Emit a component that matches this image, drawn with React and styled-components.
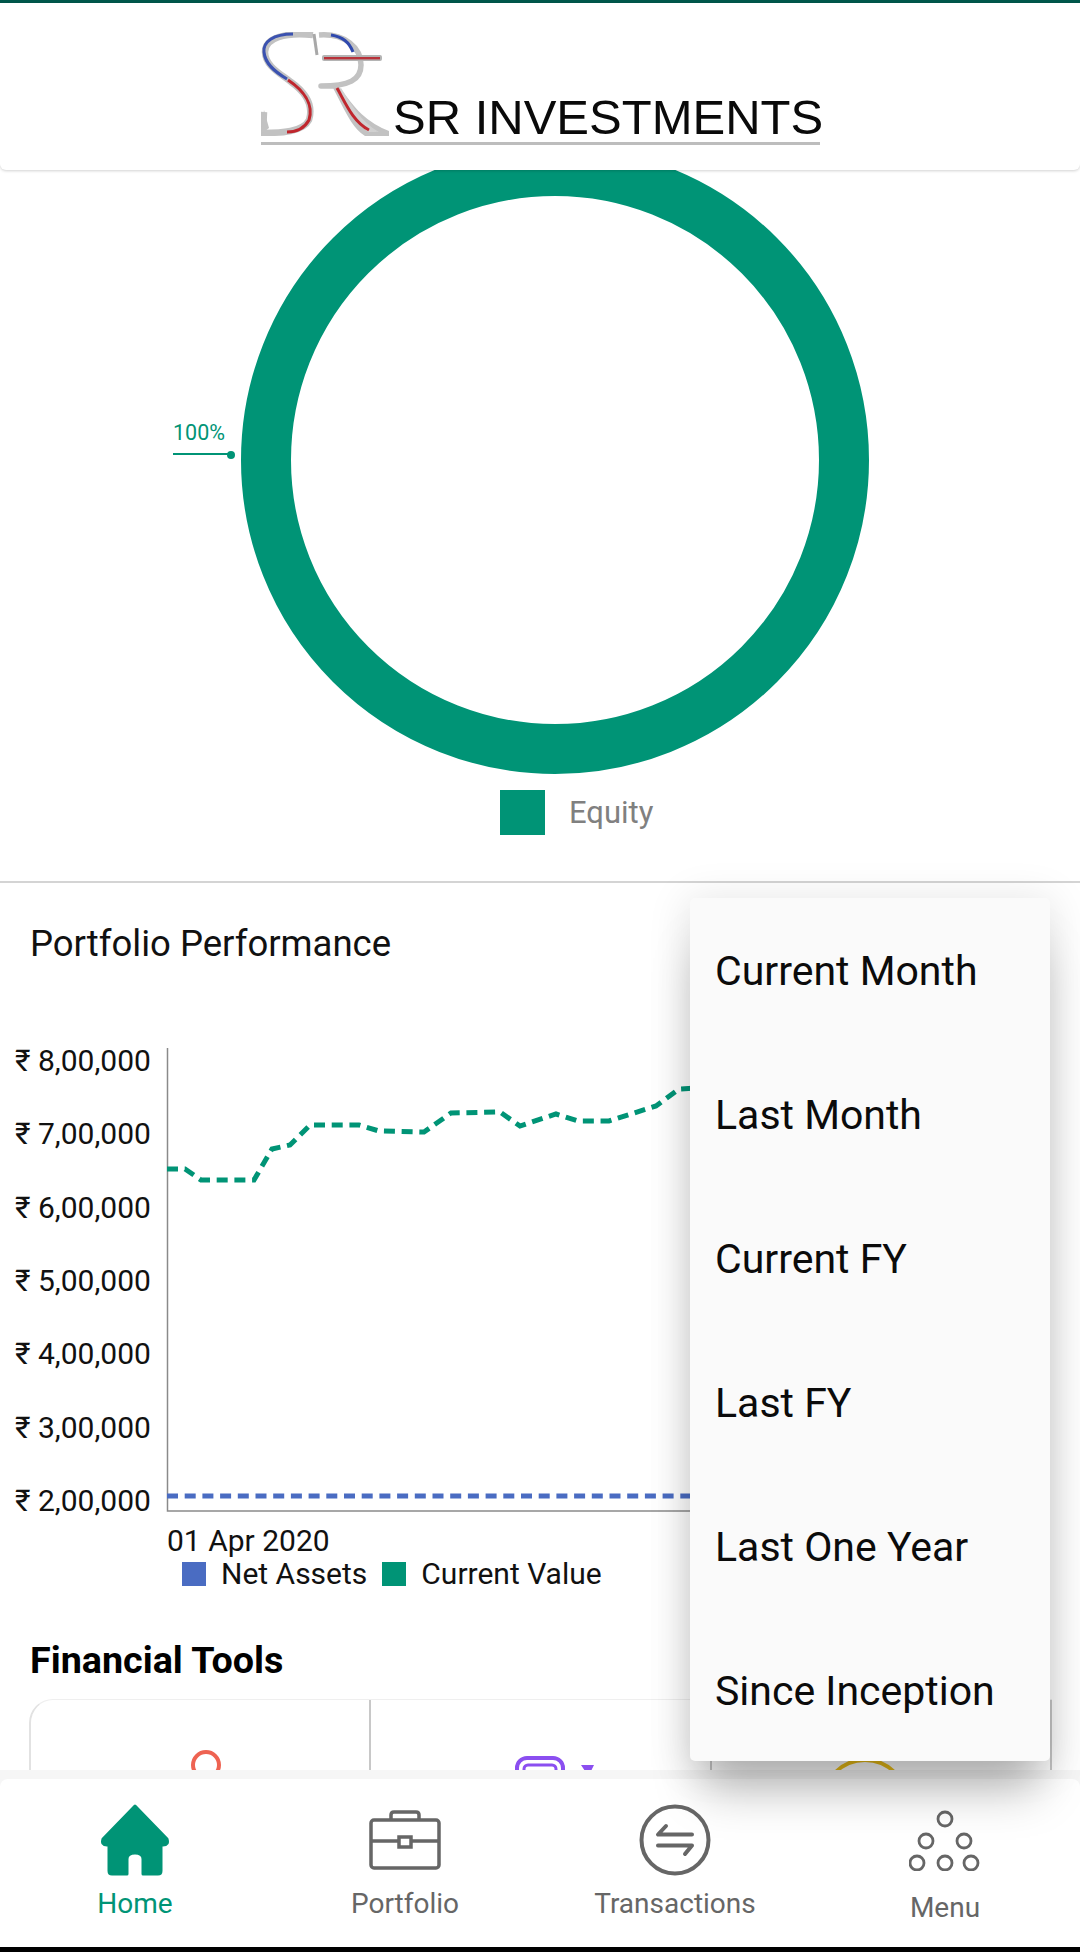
import React from "react";
import styled, { createGlobalStyle } from "styled-components";

const Global = createGlobalStyle`
  html, body { margin: 0; padding: 0; background: #fff; }
  body { font-family: Roboto, "Noto Sans", sans-serif; }
`;

const GREEN = "#009476";
const BLUE = "#4a6cc2";
const GREY = "#666666";

const Page = styled.div`
  position: relative;
  width: 1080px;
  height: 1952px;
  overflow: hidden;
  background: #fff;
  display: flex;
  flex-direction: column;
`;
const TopLine = styled.div`
  height: 3px;
  background: #00574b;
  flex: none;
`;
const Header = styled.header`
  position: relative;
  z-index: 2;
  height: 167px;
  flex: none;
  background: #fff;
  box-shadow: 0 1px 3px rgba(0, 0, 0, 0.18);
  border-radius: 0 0 6px 6px;
  display: flex;
  justify-content: flex-start;
  padding: 29px 0 0 261px;
  box-sizing: border-box;
`;
const Logo = styled.div`
  width: 559px;
  height: 110px;
  border-bottom: 3px solid #bdbdbd;
  display: flex;
  align-items: flex-start;
`;
const LogoMark = styled.svg`
  display: block;
  flex: none;
`;
const LogoWord = styled.span`
  font-family: "Liberation Sans", Arial, sans-serif;
  font-size: 49px;
  line-height: 48px;
  margin: 61px 0 0 4px;
  color: #0a0a0a;
  white-space: nowrap;
`;
const DonutBox = styled.section`
  height: 604px;
  flex: none;
`;
const DonutSvg = styled.svg`
  display: block;
`;
const LegendRow = styled.div`
  display: flex;
  align-items: center;
  flex: none;
  padding: 16px 0 46px 500px;
  border-bottom: 2px solid #d4d4d4;
`;
const Swatch = styled.i`
  display: block;
  flex: none;
  width: ${(p) => p.$size}px;
  height: ${(p) => p.$size}px;
  background: ${(p) => p.$color};
`;
const EquityText = styled.span`
  font-size: 31px;
  color: #808080;
  margin-left: 24px;
`;
const Perf = styled.section`
  flex: none;
  padding-top: 39px;
`;
const PerfTitle = styled.h2`
  margin: 0 0 0 30px;
  font-size: 36.5px;
  line-height: 44px;
  font-weight: 400;
  color: #111;
`;
const ChartSvg = styled.svg`
  display: block;
  margin-top: 75px;
`;
const DateLabel = styled.div`
  margin: 2px 0 0 167px;
  font-size: 30px;
  line-height: 36px;
  color: #111;
`;
const ChartLegend = styled.div`
  display: flex;
  align-items: center;
  height: 30px;
  padding-left: 182px;
`;
const ChartLegendText = styled.span`
  font-size: 30px;
  line-height: 30px;
  color: #111;
  margin: 0 15px 0 15px;
`;
const Tools = styled.section`
  padding: 49px 0 0 29px;
`;
const ToolsTitle = styled.h3`
  margin: 0 0 0 1px;
  font-size: 37.7px;
  line-height: 44px;
  font-weight: 700;
  color: #000;
`;
const ToolCard = styled.div`
  margin-top: 17px;
  width: 1023px;
  height: 240px;
  border-radius: 24px 0 0 0;
  border-top: 1px solid #efefef;
  border-left: 2px solid #e2e2e2;
  box-sizing: border-box;
  display: grid;
  grid-template-columns: 340px 341px 340px;
`;
const ToolCell = styled.div`
  border-right: 2px solid #c8c8c8;
  display: flex;
  justify-content: center;
  padding-top: ${(p) => p.$top}px;
  padding-left: ${(p) => Math.max(p.$shift, 0) * 2}px;
  padding-right: ${(p) => Math.max(-p.$shift, 0) * 2}px;
  box-sizing: border-box;
`;
const Dropdown = styled.ul`
  position: absolute;
  z-index: 5;
  left: 690px;
  top: 898px;
  width: 360px;
  height: 863px;
  margin: 0;
  padding: 1px 0 0;
  box-sizing: border-box;
  list-style: none;
  background: #fafafa;
  border-radius: 5px;
  box-shadow: 0 40px 45px -12px rgba(0, 0, 0, 0.28), 0 4px 40px 4px rgba(0, 0, 0, 0.1);
  display: grid;
  grid-template-rows: repeat(6, 144px);
`;
const DropItem = styled.li`
  display: flex;
  align-items: center;
  padding-left: 25px;
  font-size: 41px;
  color: #0b0b0b;
`;
const NavWrap = styled.div`
  position: absolute;
  z-index: 3;
  left: 0;
  right: 0;
  bottom: 0;
  height: 182px;
  background: #f6f6f6;
  padding-top: 9px;
  box-sizing: border-box;
`;
const Nav = styled.nav`
  height: 168px;
  background: #fff;
  border-radius: 8px 8px 0 0;
  display: grid;
  grid-template-columns: repeat(4, 270px);
`;
const NavBlack = styled.div`
  height: 5px;
  background: #000;
`;
const NavItem = styled.div`
  display: flex;
  flex-direction: column;
  align-items: center;
`;
const NavIconBox = styled.div`
  height: 70px;
  margin-top: 26px;
  display: flex;
  align-items: center;
  justify-content: center;
`;
const NavLabel = styled.span`
  margin-top: ${(p) => p.$gap}px;
  font-size: 28px;
  line-height: 30px;
  color: ${(p) => (p.$active ? GREEN : GREY)};
`;

const pts = [[167,1168],[185,1168],[201,1179],[254,1179],[272,1148],[290,1144],[310,1124],[359,1124],[379,1130],[424,1131],[451,1112],[500,1111],[520,1125],[556,1113],[578,1120],[609,1120],[634,1112],[656,1105],[679,1088],[1000,1070]];
const ticks = [["₹ 8,00,000",1059],["₹ 7,00,000",1132],["₹ 6,00,000",1206],["₹ 5,00,000",1279],["₹ 4,00,000",1352],["₹ 3,00,000",1426],["₹ 2,00,000",1499]];
const CHART_TOP = 1040;

const SrMark = () => (
  <LogoMark width="128" height="104" viewBox="0 0 128 104" aria-hidden="true">
    <path d="M52 3 C24 0 4 6 4 20 C4 34 20 42 30 50 C44 60 53 72 48 88 C42 100 20 101 2 101 L3 80" fill="none" stroke="#c2c2c2" strokeWidth="6.5" />
    <path d="M0 102 L3 78 L8 96 Z" fill="#c2c2c2" />
    <path d="M53 2 L56 23" fill="none" stroke="#a8a8a8" strokeWidth="3" />
    <path d="M32 2 C12 2 2 10 3 20 C4 32 14 40 26 47" fill="none" stroke="#3b52b0" strokeWidth="3" />
    <path d="M27 48 C42 58 53 72 48 88 C43 97 34 100 26 100" fill="none" stroke="#c0262d" strokeWidth="3" />
    <path d="M58 3 C84 1 100 16 100 33 C100 48 88 54 60 54 H74 C86 68 96 90 128 102 H106 C92 94 84 72 74 54" fill="none" stroke="#c2c2c2" strokeWidth="5.5" strokeLinejoin="round" />
    <path d="M78 60 C86 72 94 88 108 99 L118 100 C100 90 90 72 80 56 Z" fill="#d0d0d0" />
    <path d="M70 3 C82 5 88 10 92 20" fill="none" stroke="#2f49ae" strokeWidth="3" />
    <path d="M76 56 C84 70 92 90 108 98" fill="none" stroke="#c0262d" strokeWidth="3" />
    <rect x="61" y="23" width="60" height="6" rx="2" fill="#b4b4b4" />
    <rect x="63" y="25" width="56" height="2.4" fill="#b8323a" />
  </LogoMark>
);

const HomeIcon = () => (
  <svg width="72" height="72" viewBox="0 0 72 72" aria-hidden="true">
    <path d="M36 2 L68 35 Q70 41 64 41 L62 41 L62 67 Q62 70 59 70 L44 70 L44 55 Q44 49 36 49 Q28 49 28 55 L28 70 L13 70 Q10 70 10 67 L10 41 L8 41 Q2 41 4 35 Z" fill={GREEN} stroke={GREEN} strokeWidth="3" strokeLinejoin="round" />
  </svg>
);
const CaseIcon = () => (
  <svg width="72" height="60" viewBox="0 0 72 60" fill="none" stroke={GREY} strokeWidth="3.5" aria-hidden="true">
    <path d="M22 10 V5 Q22 2 25 2 H47 Q50 2 50 5 V10" />
    <rect x="2" y="10" width="68" height="48" rx="3" />
    <path d="M2 31 H30 M42 31 H70" />
    <rect x="30" y="27" width="12" height="10" fill="#fff" />
  </svg>
);
const SwapIcon = () => (
  <svg width="72" height="72" viewBox="0 0 72 72" fill="none" stroke={GREY} aria-hidden="true">
    <circle cx="36" cy="36" r="33.5" strokeWidth="4" />
    <path d="M27 22 L19 30.5 H53 M19 41.5 H53 L46 50" strokeWidth="4" strokeLinecap="round" strokeLinejoin="round" />
  </svg>
);
const DotsIcon = () => (
  <svg width="72" height="62" viewBox="0 0 72 62" fill="none" stroke={GREY} strokeWidth="2.8" aria-hidden="true">
    {[[36,10],[17,32],[55,32],[8,54],[36,54],[62,54]].map(([x, y]) => (
      <circle key={x + "-" + y} cx={x} cy={y} r="7" />
    ))}
  </svg>
);

const tools = [
  { top: 49, shift: 6, icon: <svg width="30" height="60" viewBox="0 0 30 60" fill="none" stroke="#ee6352" strokeWidth="4"><circle cx="15" cy="16" r="13" /></svg> },
  { top: 56, shift: 14, icon: <svg width="80" height="60" viewBox="0 0 80 60" fill="none"><rect x="2" y="2" width="46" height="50" rx="10" stroke="#8b4ff0" strokeWidth="4" /><rect x="9" y="9" width="32" height="10" rx="4" stroke="#8b4ff0" strokeWidth="3" /><path d="M66 9 H79 L76 15 L77 22 H68 L70 15 Z" fill="#8b4ff0" /></svg> },
  { top: 58, shift: -16, icon: <svg width="88" height="60" viewBox="0 0 88 60" fill="none" stroke="#ecbf18" strokeWidth="4"><circle cx="44" cy="44" r="42" /></svg> },
];

export default function App() {
  return (
    <Page>
      <Global />
      <TopLine />
      <Header>
        <Logo>
          <SrMark />
          <LogoWord>SR INVESTMENTS</LogoWord>
        </Logo>
      </Header>
      <DonutBox>
        <DonutSvg width="1080" height="604" viewBox="0 170 1080 604">
          <circle cx="555" cy="460" r="289" fill="none" stroke={GREEN} strokeWidth="50" />
          <text x="173" y="440" fontFamily="Roboto, sans-serif" fontSize="21.5" fill={GREEN}>100%</text>
          <path d="M173 454 H231" stroke={GREEN} strokeWidth="2" />
          <circle cx="231" cy="455" r="4" fill={GREEN} />
        </DonutSvg>
      </DonutBox>
      <LegendRow>
        <Swatch $size={45} $color={GREEN} />
        <EquityText>Equity</EquityText>
      </LegendRow>
      <Perf>
        <PerfTitle>Portfolio Performance</PerfTitle>
        <ChartSvg width="1080" height="480" viewBox={`0 ${CHART_TOP} 1080 480`}>
          {ticks.map(([t, y]) => (
            <text key={t} x="15" y={y + 11} fontFamily='Roboto, "Noto Sans", sans-serif' fontSize="30" fill="#111">{t}</text>
          ))}
          <path d="M167.5 1047 V1510 H1050" fill="none" stroke="#8a8a8a" strokeWidth="1.5" />
          <path d="M167 1495 H1050" stroke={BLUE} strokeWidth="5" strokeDasharray="11 6.7" />
          <path d={"M" + pts.map((p) => p.join(" ")).join(" L")} fill="none" stroke={GREEN} strokeWidth="5" strokeDasharray="11 6.7" />
        </ChartSvg>
        <DateLabel>01 Apr 2020</DateLabel>
        <ChartLegend>
          <Swatch $size={24} $color={BLUE} />
          <ChartLegendText>Net Assets</ChartLegendText>
          <Swatch $size={24} $color={GREEN} />
          <ChartLegendText>Current Value</ChartLegendText>
        </ChartLegend>
      </Perf>
      <Tools>
        <ToolsTitle>Financial Tools</ToolsTitle>
        <ToolCard>
          {tools.map((t, i) => (
            <ToolCell key={i} $top={t.top} $shift={t.shift}>{t.icon}</ToolCell>
          ))}
        </ToolCard>
      </Tools>
      <NavWrap>
        <Nav>
          <NavItem>
            <NavIconBox><HomeIcon /></NavIconBox>
            <NavLabel $active $gap={14}>Home</NavLabel>
          </NavItem>
          <NavItem>
            <NavIconBox><CaseIcon /></NavIconBox>
            <NavLabel $gap={14}>Portfolio</NavLabel>
          </NavItem>
          <NavItem>
            <NavIconBox><SwapIcon /></NavIconBox>
            <NavLabel $gap={14}>Transactions</NavLabel>
          </NavItem>
          <NavItem>
            <NavIconBox><DotsIcon /></NavIconBox>
            <NavLabel $gap={18}>Menu</NavLabel>
          </NavItem>
        </Nav>
        <NavBlack />
      </NavWrap>
      <Dropdown>
        {["Current Month", "Last Month", "Current FY", "Last FY", "Last One Year", "Since Inception"].map((m) => (
          <DropItem key={m}>{m}</DropItem>
        ))}
      </Dropdown>
    </Page>
  );
}
